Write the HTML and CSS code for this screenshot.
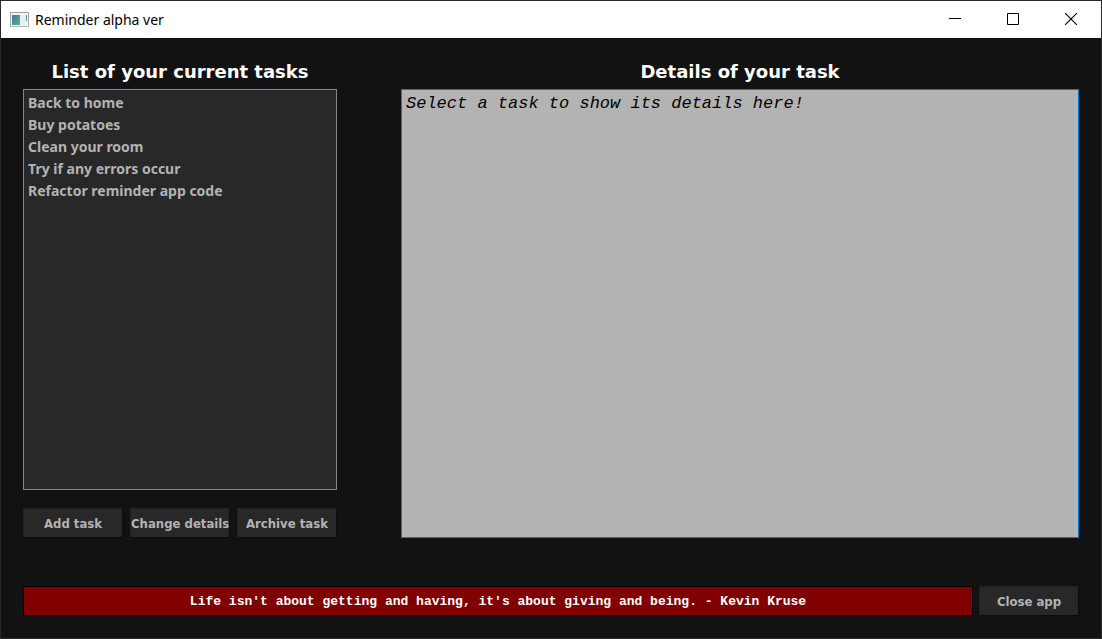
FILE: index.html
```html
<!DOCTYPE html>
<html lang="en">
<head>
<meta charset="utf-8">
<title>Reminder alpha ver</title>
<link rel="stylesheet" href="styles.css">
</head>
<body>
<div class="window">
  <header class="titlebar">
    <svg class="app-icon" width="19" height="15" viewBox="0 0 19 15" aria-hidden="true">
      <defs>
        <linearGradient id="pane" x1="0" y1="0" x2="1" y2="1">
          <stop offset="0" stop-color="#4474a0"/>
          <stop offset="1" stop-color="#57b487"/>
        </linearGradient>
        <linearGradient id="frame" x1="0" y1="0" x2="0" y2="1">
          <stop offset="0" stop-color="#9aa2aa"/>
          <stop offset="1" stop-color="#b4b8bc"/>
        </linearGradient>
      </defs>
      <rect width="19" height="15" fill="url(#frame)"/>
      <rect x="1" y="1" width="17" height="13" fill="#f3f4f5"/>
      <rect x="2" y="3" width="8" height="10" fill="url(#pane)"/>
      <rect x="11" y="3" width="4" height="10" fill="#e9ebec"/>
      <rect x="16" y="3" width="1" height="6" fill="url(#pane)"/>
    </svg>
    <h1 class="title">Reminder alpha ver</h1>
    <div class="controls">
      <button class="control" type="button" aria-label="Minimize">
        <svg width="12" height="12" viewBox="0 0 12 12"><rect y="5" width="12" height="1"/></svg>
      </button>
      <button class="control" type="button" aria-label="Maximize">
        <svg width="12" height="12" viewBox="0 0 12 12"><path d="M.5.5h11v11H.5z" fill="none" stroke="#000"/></svg>
      </button>
      <button class="control" type="button" aria-label="Close">
        <svg width="12" height="12" viewBox="0 0 12 12"><path d="M0 0l12 12M12 0L0 12" fill="none" stroke="#000" stroke-width="1.1"/></svg>
      </button>
    </div>
  </header>
  <main class="content">
    <div class="columns">
      <section class="tasks">
        <h2 class="heading">List of your current tasks</h2>
        <ul class="task-list">
          <li>Back to home</li>
          <li>Buy potatoes</li>
          <li>Clean your room</li>
          <li>Try if any errors occur</li>
          <li>Refactor reminder app code</li>
        </ul>
        <div class="actions">
          <button class="button" type="button">Add task</button>
          <button class="button" type="button">Change details</button>
          <button class="button" type="button">Archive task</button>
        </div>
      </section>
      <section class="details">
        <h2 class="heading"><label for="details">Details of your task</label></h2>
        <textarea class="details-text" id="details" placeholder="Select a task to show its details here!"></textarea>
      </section>
    </div>
    <footer class="footer">
      <p class="quote">Life isn't about getting and having, it's about giving and being. - Kevin Kruse</p>
      <button class="button" type="button">Close app</button>
    </footer>
  </main>
</div>
</body>
</html>
```
FILE: styles.css
```css
* {
  box-sizing: border-box;
}

body {
  margin: 0;
  background: #121212;
}

.window {
  display: flex;
  flex-direction: column;
  min-height: 100vh;
  border: 1px solid #2a2a2a;
  background: #121212;
}

.titlebar {
  display: flex;
  align-items: center;
  height: 37px;
  padding-left: 9px;
  background: #fff;
}

.title {
  flex: 1;
  margin: 0 0 0 6px;
  font: 400 14px/20px "Noto Sans", "Open Sans", sans-serif;
  color: #000;
}

.controls {
  display: flex;
  height: 100%;
  padding: 0 1px 2px 0;
}

.control {
  display: flex;
  align-items: center;
  justify-content: center;
  width: 58px;
  padding: 0;
  border: 0;
  background: none;
}

.content {
  display: flex;
  flex: 1;
  flex-direction: column;
  gap: 48px;
  padding: 20px 22px 22px;
}

.columns {
  display: grid;
  flex: 1;
  grid-template-columns: 314px 1fr;
  gap: 64px;
}

.tasks,
.details {
  display: flex;
  flex-direction: column;
}

.heading {
  margin: 0 0 4px;
  font: 700 18px/27px "DejaVu Sans", Verdana, sans-serif;
  text-align: center;
  color: #fff;
}

.task-list {
  flex: 1;
  margin: 0 0 18px;
  padding: 2px 4px;
  border: 1px solid #828790;
  background: #282828;
  list-style: none;
  font: 700 14px/22px "Noto Sans", "Open Sans", sans-serif;
  color: #b3b3b3;
}

.actions {
  display: flex;
  gap: 7px;
}

.button {
  width: 100px;
  height: 30px;
  padding: 2px 0 0;
  border: 1px solid;
  border-color: #202020 #0c0c0c #0c0c0c #202020;
  background: #282828;
  font: 700 13px/20px "DejaVu Sans Condensed", Tahoma, sans-serif;
  white-space: nowrap;
  color: #b3b3b3;
}

.details-text {
  flex: 1;
  width: 100%;
  padding: 4px 4px;
  border: 1px solid #0078d7;
  border-radius: 0;
  outline: 0;
  background: #b3b3b3;
  resize: none;
  font: italic 17px/20px "Liberation Mono", "Courier New", monospace;
  color: #000;
}

.details-text::placeholder {
  color: #000;
  opacity: 1;
}

.footer {
  display: flex;
  gap: 6px;
}

.quote {
  flex: 1;
  margin: 0;
  padding-top: 2px;
  border: 1px solid #000;
  background: #800000;
  font: 700 13px/26px "Liberation Mono", "Courier New", monospace;
  text-align: center;
  color: #fff;
}
```
